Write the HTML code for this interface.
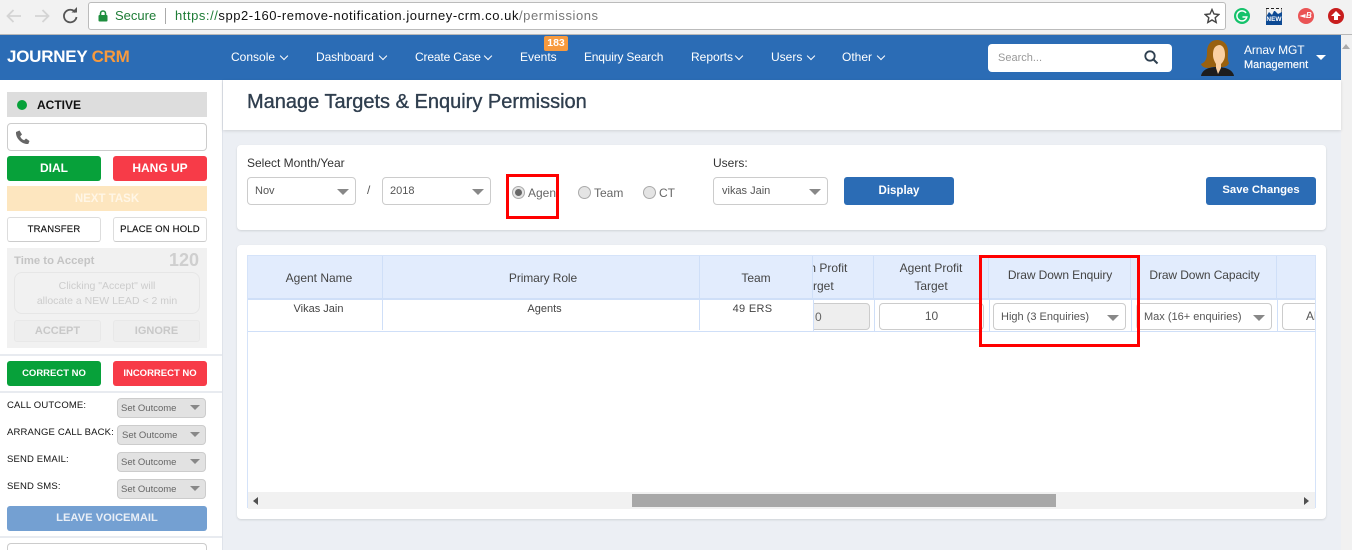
<!DOCTYPE html>
<html style="overflow:hidden;width:1352px;height:550px"><head><meta charset="utf-8"><style>
*{box-sizing:border-box}
html,body{margin:0;padding:0}
body{width:1352px;height:550px;overflow:hidden;position:relative;background:#eceff4;font-family:"Liberation Sans",sans-serif;font-size:12px;color:#333}
.a{position:absolute}
.t{position:absolute;white-space:nowrap;line-height:16px}
.c{text-align:center}
.nav{color:#fff;font-size:12px;top:49px}
.chev{position:absolute;width:6px;height:6px;border-right:1.2px solid #fff;border-bottom:1.2px solid #fff;transform:rotate(45deg)}
.btn{position:absolute;border-radius:3px;color:#fff;font-weight:bold;text-align:center;font-size:12px}
.wb{position:absolute;background:#fff;border-radius:3px;border:1px solid #ddd;border-bottom-color:#ccc;color:#111;font-size:9.5px;text-align:center;line-height:23px;height:25px;width:94px;letter-spacing:.2px;-webkit-text-stroke:.15px #111}
.sel{position:absolute;background:#fff;border:1px solid #ccc;border-radius:4px;font-size:11px;color:#555;line-height:27px;padding-left:7px;height:28px}
.sel:after{content:"";position:absolute;right:6px;top:11px;border-left:6px solid transparent;border-right:6px solid transparent;border-top:6px solid #888}
.out{position:absolute;left:117px;width:89px;height:20px;background:#e2e2e2;border:1px solid #ccc;border-radius:4px;font-size:9.5px;color:#666;line-height:20px;padding-left:3px}
.out:after{content:"";position:absolute;right:5px;top:6px;border-left:5px solid transparent;border-right:5px solid transparent;border-top:5px solid #888}
.lbl{position:absolute;left:7px;font-size:9.5px;color:#111;line-height:12px;white-space:nowrap;letter-spacing:.15px}
.card{position:absolute;left:237px;width:1089px;background:#fff;border-radius:4px;box-shadow:0 1px 2px rgba(0,0,0,.12)}
.th{position:absolute;top:256px;height:42px;background:#e2ecfd;border-right:1.5px solid #cfdff8;color:#444;font-size:12px;text-align:center}
.vl{position:absolute;width:1px;background:#cfdff8}
.radio{position:absolute;width:13px;height:13px;border-radius:50%;background:#e4e4e4;border:1px solid #aaa}
.red{position:absolute;border:3px solid #f00}
</style></head><body>

<!-- Browser chrome -->
<div class="a" style="left:0;top:0;width:1352px;height:35px;background:#f2f2f2;border-bottom:1px solid #b8b8b8"></div>
<svg class="a" style="left:0;top:0" width="88" height="34" fill="none">
<path d="M21 16H8M13.500 10L7.500 16l6 6" stroke="#d4d4d4" stroke-width="1.800"/>
<path d="M35 16h13M42.500 10l6 6-6 6" stroke="#d4d4d4" stroke-width="1.800"/>
<path d="M75.500 12.500A6.300 6.300 0 1 0 76.500 17" stroke="#555" stroke-width="1.800"/>
<path d="M71.500 12.500h5.500V7z" fill="#555"/>
</svg>
<div class="a" style="left:88px;top:2px;width:1138px;height:28px;background:#fff;border:1px solid #bbb;border-radius:3px"></div>
<svg class="a" style="left:97px;top:9px" width="12" height="14"><path d="M3.500 6V4.500a2.500 2.500 0 0 1 5 0V6" stroke="#1e8e3e" stroke-width="1.600" fill="none"/><rect x="1.500" y="6" width="9" height="6.500" rx="1" fill="#1e8e3e"/></svg>
<div class="t" style="left:115px;top:8px;font-size:13px;color:#1e7c36">Secure</div>
<div class="a" style="left:165px;top:8px;width:1px;height:16px;background:#aaa"></div>
<div class="t" style="left:175px;top:8px;font-size:13px;color:#111;letter-spacing:.55px"><span style="color:#1e7c36">https://</span>spp2-160-remove-notification.journey-crm.co.uk<span style="color:#777">/permissions</span></div>
<svg class="a" style="left:1204px;top:8px" width="16" height="16"><path d="M8 1.500l2 4.500 4.800.5-3.600 3.200 1 4.800L8 12l-4.200 2.500 1-4.800L1.200 6.500 6 6z" fill="none" stroke="#444" stroke-width="1.400"/></svg>
<svg class="a" style="left:1232px;top:6px" width="20" height="20"><circle cx="10" cy="10" r="8" fill="#15c26b"/><path d="M14 7a5 5 0 1 0 .8 4H10.500" fill="none" stroke="#fff" stroke-width="1.500"/></svg>
<svg class="a" style="left:1265px;top:7px" width="18" height="18"><path d="M1 1.500h16" stroke="#222" stroke-dasharray="3 2"/><path d="M1.500 2v9M16.500 2v9" stroke="#999"/><path d="M1 10l3-5 3 3 2-4h1l3 3 4-2v13H1z" fill="#0d4a94"/></svg>
<div class="t" style="left:1265px;top:15px;width:18px;text-align:center;color:#fff;font-size:6.500px;font-weight:bold;line-height:9px">NEW</div>
<svg class="a" style="left:1296px;top:6px" width="20" height="20"><circle cx="10" cy="10" r="8" fill="#ea5455"/><path d="M3.500 10l6-2v4z" fill="#fff"/></svg>
<div class="t" style="left:1306px;top:11px;color:#fff;font-size:8px;line-height:10px;font-weight:bold;font-style:italic">B</div>
<svg class="a" style="left:1326px;top:6px" width="20" height="20"><circle cx="10" cy="10" r="8" fill="#c81e1e"/><path d="M10 5l5 5h-3v4H8v-4H5z" fill="#fff"/></svg>

<!-- Nav -->
<div class="a" style="left:0;top:35px;width:1341px;height:45px;background:#2b6cb5"></div>
<div class="a" style="left:1341px;top:35px;width:11px;height:515px;background:#f1f1f1"></div>
<div class="a" style="left:1342px;top:44px;border-left:4px solid transparent;border-right:4px solid transparent;border-bottom:5px solid #aaa"></div>
<div class="t" style="left:7px;top:47px;font-size:17px;line-height:20px;font-weight:bold;color:#fff;letter-spacing:-.25px">JOURNEY <span style="color:#f79a3e">CRM</span></div>
<div class="t nav" style="left:231px">Console</div><div class="chev" style="left:281px;top:53px"></div>
<div class="t nav" style="left:316px;letter-spacing:-.1px">Dashboard</div><div class="chev" style="left:380px;top:53px"></div>
<div class="t nav" style="left:415px;letter-spacing:-.15px">Create Case</div><div class="chev" style="left:485px;top:53px"></div>
<div class="t nav" style="left:520px">Events</div>
<div class="a c" style="left:544px;top:36px;width:24px;height:15px;background:#f79a3e;border-radius:2px;color:#fff;font-size:10.500px;font-weight:bold;line-height:14px">183</div>
<div class="t nav" style="left:584px;letter-spacing:-.2px">Enquiry Search</div>
<div class="t nav" style="left:691px">Reports</div><div class="chev" style="left:736px;top:53px"></div>
<div class="t nav" style="left:771px">Users</div><div class="chev" style="left:808px;top:53px"></div>
<div class="t nav" style="left:842px">Other</div><div class="chev" style="left:878px;top:53px"></div>
<div class="a" style="left:988px;top:44px;width:184px;height:28px;background:#fff;border-radius:4px"></div>
<div class="t" style="left:998px;top:50px;font-size:11px;color:#999">Search...</div>
<svg class="a" style="left:1143px;top:49px" width="16" height="16" fill="none"><circle cx="7" cy="7" r="4.700" stroke="#2f4050" stroke-width="1.800"/><path d="M10.500 10.500l4 4" stroke="#2f4050" stroke-width="2"/></svg>
<svg class="a" style="left:1201px;top:40px" width="33" height="37">
<path d="M0 36c1-6 7-9 16-9s16 3 17 9z" fill="#1d1d1d"/>
<path d="M16 0C9 0 6 6 6 12c0 6-1 10-6 12 1 4 7 5 11 3h10c3 0 6-1 7-4-2-4-1-8-1-12C27 5 23 0 16 0z" fill="#99610f"/>
<path d="M18 5c-5 1-6 5-6 10 0 4 2 7 3 9v4l2 6 3-6v-4c2-2 4-5 4-9 0-6-2-10-6-10z" fill="#fad0a2"/>
</svg>
<div class="t" style="left:1244px;top:42px;font-size:12px;color:#fff;letter-spacing:-.1px">Arnav MGT</div>
<div class="t" style="left:1244px;top:57px;font-size:11px;color:#fff;-webkit-text-stroke:.15px #fff">Management</div>
<div class="a" style="left:1316px;top:55px;border-left:5px solid transparent;border-right:5px solid transparent;border-top:5px solid #fff"></div>

<!-- Sidebar -->
<div class="a" style="left:0;top:80px;width:222px;height:470px;background:#fff"></div>
<div class="a" style="left:222px;top:80px;width:1px;height:470px;background:#dfe3ea"></div>
<div class="a" style="left:7px;top:92px;width:200px;height:25px;background:#ddd"></div>
<div class="a" style="left:17px;top:100px;width:10px;height:10px;border-radius:50%;background:#07a13a"></div>
<div class="t" style="left:37px;top:97px;font-weight:bold;color:#111">ACTIVE</div>
<div class="a" style="left:7px;top:123px;width:200px;height:28px;border:1px solid #ccc;border-radius:4px;background:#fff"></div>
<svg class="a" style="left:14px;top:129px" width="17" height="17"><path d="M2 3l3.500-1.500 2.500 4-1.800 1.700c.6 2 2 3.400 4 4L12 9.500l3.500 2.500-1.200 3C7.500 15.500 1.500 9 2 3z" fill="#666"/></svg>
<div class="btn" style="left:7px;top:156px;width:94px;height:25px;line-height:25px;background:#07a13a">DIAL</div>
<div class="btn" style="left:113px;top:156px;width:94px;height:25px;line-height:25px;background:#f73b48">HANG UP</div>
<div class="btn" style="left:7px;top:186px;width:200px;height:25px;line-height:26px;background:#fde6bf;border-radius:0;font-size:11.500px;color:#fff6e6">NEXT TASK</div>
<div class="wb" style="left:7px;top:217px">TRANSFER</div>
<div class="wb" style="left:113px;top:217px">PLACE ON HOLD</div>
<div class="a" style="left:7px;top:248px;width:200px;height:100px;background:#f1f1f1"></div>
<div class="t" style="left:14px;top:253px;font-weight:bold;font-size:11.300px;color:#c4c4c4">Time to Accept</div>
<div class="t" style="left:169px;top:250px;font-size:18px;line-height:20px;font-weight:bold;color:#cfcfcf">120</div>
<div class="a c" style="left:14px;top:272px;width:186px;height:42px;border:1px solid #e6e6e6;border-radius:8px;color:#ccc;font-size:10.500px;line-height:15px;padding-top:6px">Clicking "Accept" will<br>allocate a NEW LEAD &lt; 2 min</div>
<div class="a c" style="left:14px;top:320px;width:87px;height:22px;border:1px solid #e8e8e8;border-radius:3px;background:#eee;color:#c8c8c8;font-weight:bold;font-size:11px;line-height:21px">ACCEPT</div>
<div class="a c" style="left:113px;top:320px;width:87px;height:22px;border:1px solid #e8e8e8;border-radius:3px;background:#eee;color:#c8c8c8;font-weight:bold;font-size:11px;line-height:21px">IGNORE</div>
<div class="a" style="left:0;top:354px;width:222px;height:2px;background:#e8ebf0"></div>
<div class="btn" style="left:7px;top:361px;width:94px;height:25px;line-height:25px;background:#07a13a;font-size:9.500px">CORRECT NO</div>
<div class="btn" style="left:113px;top:361px;width:94px;height:25px;line-height:25px;background:#f73b48;font-size:9.500px">INCORRECT NO</div>
<div class="a" style="left:0;top:391px;width:222px;height:2px;background:#e8ebf0"></div>
<div class="lbl" style="top:400px">CALL OUTCOME:</div>
<div class="out" style="top:398px">Set Outcome</div>
<div class="lbl" style="top:427px">ARRANGE CALL BACK:</div>
<div class="out" style="top:425px;padding-left:4px">Set Outcome</div>
<div class="lbl" style="top:454px">SEND EMAIL:</div>
<div class="out" style="top:452px">Set Outcome</div>
<div class="lbl" style="top:481px">SEND SMS:</div>
<div class="out" style="top:479px">Set Outcome</div>
<div class="btn" style="left:7px;top:506px;width:200px;height:25px;line-height:25px;background:#74a0d2;color:#e8eef6;font-size:11.200px">LEAVE VOICEMAIL</div>
<div class="a" style="left:0;top:536px;width:222px;height:2px;background:#e8ebf0"></div>
<div class="a" style="left:7px;top:543px;width:200px;height:7px;border:1px solid #ccc;border-bottom:0;border-radius:4px 4px 0 0"></div>

<!-- Title bar -->
<div class="a" style="left:223px;top:80px;width:1118px;height:50px;background:#fff;box-shadow:0 1px 3px rgba(0,0,0,.12)"></div>
<div class="t" style="left:247px;top:90px;font-size:20px;line-height:24px;color:#2f3e4e;-webkit-text-stroke:.35px #2f3e4e">Manage Targets &amp; Enquiry Permission</div>

<!-- Card 1 -->
<div class="card" style="top:145px;height:85px"></div>
<div class="t" style="left:247px;top:155px;color:#333">Select Month/Year</div>
<div class="sel" style="left:247px;top:177px;width:109px">Nov</div>
<div class="t" style="left:367px;top:182px;color:#555">/</div>
<div class="sel" style="left:382px;top:177px;width:109px">2018</div>
<div class="radio" style="left:512px;top:186px"></div>
<div class="a" style="left:515px;top:189px;width:7px;height:7px;border-radius:50%;background:#666"></div>
<div class="t" style="left:528px;top:185px;color:#666;width:29px;overflow:hidden">Agent</div>
<div class="radio" style="left:578px;top:186px"></div>
<div class="t" style="left:594px;top:185px;color:#666">Team</div>
<div class="radio" style="left:643px;top:186px"></div>
<div class="t" style="left:659px;top:185px;color:#666">CT</div>
<div class="t" style="left:713px;top:155px;color:#333">Users:</div>
<div class="sel" style="left:713px;top:177px;width:115px;padding-left:8px">vikas Jain</div>
<div class="btn" style="left:844px;top:177px;width:110px;height:28px;line-height:28px;background:#2b6cb5;font-size:11.500px">Display</div>
<div class="btn" style="left:1206px;top:177px;width:110px;height:28px;line-height:26px;background:#2b6cb5;font-size:11.300px">Save Changes</div>

<!-- Card 2 -->
<div class="card" style="top:245px;height:274px"></div>
<div class="a" style="left:247px;top:255px;width:1069px;height:253px;border:1px solid #d5e3f9;border-bottom:0"></div>
<div class="a" style="left:248px;top:298px;width:1067px;height:1.500px;background:#cfdff8"></div>
<div class="a" style="left:248px;top:331px;width:1067px;height:1px;background:#cfdff8"></div>

<!-- Scrolled columns -->
<div class="th" style="left:813px;width:61px;line-height:18px;padding-top:3px;overflow:hidden"><span style="display:block;width:90px;margin-left:-41px">Team Profit<br>Target</span></div>
<div class="th" style="left:874px;width:115px;line-height:18px;padding-top:3px">Agent Profit<br>Target</div>
<div class="th" style="left:989px;width:142px;line-height:38px;letter-spacing:-.1px;padding-left:1px">Draw Down Enquiry</div>
<div class="th" style="left:1131px;width:146px;line-height:38px;letter-spacing:-.1px;padding-left:2px">Draw Down Capacity</div>
<div class="th" style="left:1277px;width:38px;border-right:0"></div>
<div class="vl" style="left:874px;top:299px;height:32px"></div>
<div class="vl" style="left:989px;top:299px;height:32px"></div>
<div class="vl" style="left:1131px;top:299px;height:32px"></div>
<div class="vl" style="left:1277px;top:299px;height:32px"></div>
<div class="a" style="left:790px;top:303px;width:80px;height:27px;background:#eee;border:1px solid #ccc;border-radius:4px"></div>
<div class="t" style="left:815px;top:309px;color:#666">0</div>
<div class="a c" style="left:879px;top:303px;width:105px;height:27px;background:#fff;border:1px solid #ccc;border-radius:4px;line-height:25px;color:#555">10</div>
<div class="sel" style="left:993px;top:303px;width:133px;height:27px;line-height:26px">High (3 Enquiries)</div>
<div class="sel" style="left:1136px;top:303px;width:136px;height:27px;line-height:26px;border-left-color:#ddd">Max (16+ enquiries)</div>
<div class="a" style="left:1282px;top:303px;width:33px;height:27px;background:#fff;border:1px solid #ccc;border-right:0;border-radius:4px 0 0 4px;padding-left:23px;line-height:25px;color:#555;overflow:hidden">Al</div>

<!-- Frozen columns -->
<div class="a" style="left:248px;top:299.500px;width:565px;height:31.500px;background:#fff"></div>
<div class="th" style="left:248px;width:135px;line-height:44px;padding-left:8px">Agent Name</div>
<div class="th" style="left:383px;width:317px;line-height:44px;padding-left:4px;letter-spacing:-.1px">Primary Role</div>
<div class="th" style="left:700px;width:113px;line-height:44px">Team</div>
<div class="t c" style="left:248px;top:301px;width:141px;font-size:11px;color:#444">Vikas Jain</div>
<div class="t c" style="left:383px;top:301px;width:323px;font-size:11px;color:#444">Agents</div>
<div class="t c" style="left:699px;top:301px;width:107px;font-size:11px;color:#444;letter-spacing:.3px">49 ERS</div>
<div class="vl" style="left:382px;top:299px;height:31px"></div>
<div class="vl" style="left:699px;top:299px;height:31px"></div>
<div class="vl" style="left:813px;top:299px;height:32px"></div>

<!-- Scrollbar -->
<div class="a" style="left:248px;top:492px;width:1067px;height:17px;background:#f1f1f1"></div>
<div class="a" style="left:632px;top:494px;width:424px;height:13px;background:#a8a8a8"></div>
<div class="a" style="left:253px;top:497px;border-top:4px solid transparent;border-bottom:4px solid transparent;border-right:5px solid #505050"></div>
<div class="a" style="left:1304px;top:497px;border-top:4px solid transparent;border-bottom:4px solid transparent;border-left:5px solid #505050"></div>

<!-- Red annotations -->
<div class="red" style="left:506px;top:174px;width:53px;height:45px"></div>
<div class="red" style="left:979px;top:255px;width:161px;height:92px"></div>
</body></html>
